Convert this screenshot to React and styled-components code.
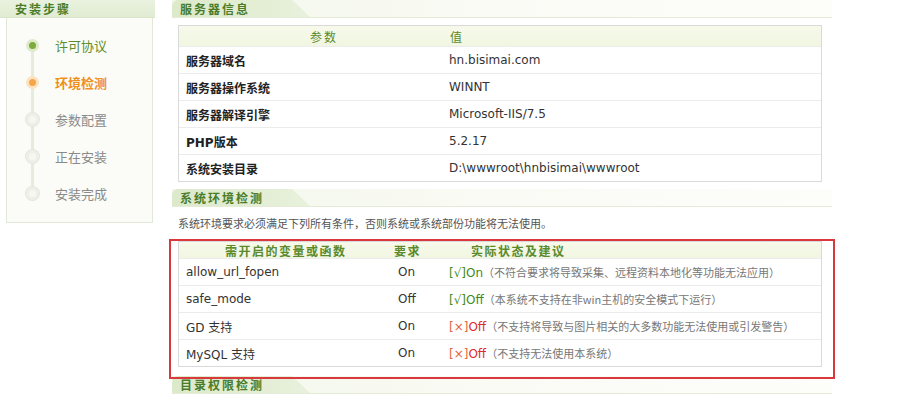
import React from 'react';
import styled, { createGlobalStyle } from 'styled-components';

const GlobalStyle = createGlobalStyle`
  body {
    margin: 0;
    background: #fff;
    font-family: "DejaVu Sans", "Noto Sans CJK SC", sans-serif;
    color: #333;
  }
`;

const Page = styled.div`
  display: flex;
  align-items: flex-start;
  width: 923px;
  height: 400px;
  overflow: hidden;
`;

const Sidebar = styled.div`
  flex: none;
  width: 155px;
`;

const SideHead = styled.div`
  height: 17px;
  line-height: 17px;
  padding-left: 15px;
  background: linear-gradient(#eaf2df, #e1ecd2);
  border-bottom: 1px solid #d9e5c8;
  color: #4a7c2a;
  font: bold 12px "Noto Sans CJK SC", sans-serif;
  letter-spacing: 2px;
`;

const StepPanel = styled.div`
  margin: 0 2px 0 6px;
  height: 205px;
  box-sizing: border-box;
  border: 1px solid #e2e8d6;
  border-top: none;
  background: #fbfcf7;
  padding-top: 9px;
`;

const StepList = styled.div`
  position: relative;

  &::before {
    content: '';
    position: absolute;
    left: 24px;
    top: 18px;
    bottom: 18px;
    width: 3px;
    background: #e7ebde;
  }
`;

const Step = styled.div`
  height: 37px;
  display: flex;
  align-items: center;
  font-family: "Noto Sans CJK SC", sans-serif;
  font-size: 13px;
  font-weight: ${p => (p.$state === 'current' ? 'bold' : 'normal')};
  color: ${p =>
    p.$state === 'done' ? '#5d8d2c' : p.$state === 'current' ? '#f0901c' : '#8a8a8a'};
`;

const Dot = styled.span`
  position: relative;
  flex: none;
  width: 13px;
  height: 13px;
  margin: 0 16px 0 19px;
  border-radius: 50%;
  background: ${p =>
    p.$state === 'done' ? '#dfeacb' : p.$state === 'current' ? '#fbe3c2' : '#eef0e8'};
  box-shadow: 0 0 0 1px ${p => (p.$state === 'pending' ? '#e4e7dc' : 'transparent')};

  &::after {
    content: '';
    position: absolute;
    left: 3px;
    top: 3px;
    width: 7px;
    height: 7px;
    border-radius: 50%;
    background: ${p =>
      p.$state === 'done' ? '#7fab3e' : p.$state === 'current' ? '#f5a64a' : '#f6f7f2'};
  }
`;

const Main = styled.div`
  flex: none;
  width: 660px;
  margin-left: 17px;
`;

const TabBar = styled.div`
  position: relative;
  height: 17px;
  margin-top: ${p => p.$top || 0}px;
  border-bottom: 1px solid #e4ecd8;
  background: linear-gradient(to right, #f3f7ea, #fafbf5 50%, #fdfdfa);
`;

const Tab = styled.div`
  width: 138px;
  height: 17px;
  line-height: 18px;
  padding-left: 8px;
  box-sizing: border-box;
  border-top-left-radius: 6px;
  background: linear-gradient(to right, #dce9ca, #e8f1dc);
  clip-path: polygon(0 0, 87% 0, 100% 100%, 0 100%);
  color: #4a7c2a;
  font: bold 12px "Noto Sans CJK SC", sans-serif;
  letter-spacing: 2px;
`;

const Table = styled.div`
  width: 644px;
  box-sizing: border-box;
  border: 1px solid #dadada;
  background: #fff;
  margin: ${p => p.$margin || '0'};
`;

const Row = styled.div`
  display: grid;
  grid-template-columns: ${p => p.$cols};
  height: ${p => p.$h || 27}px;
  align-items: center;
  border-top: ${p => (p.$head ? 'none' : '1px solid #ececec')};
  background: ${p => (p.$head ? 'linear-gradient(#f7f9ea, #f1f6e2)' : '#fff')};
  box-sizing: border-box;
`;

const HeadCell = styled.div`
  padding-left: ${p => p.$pad}px;
  color: #5a8a2c;
  font: ${p => (p.$bold ? 'bold' : 'normal')} 12px "Noto Sans CJK SC", sans-serif;
  letter-spacing: ${p => (p.$bold ? '1.5px' : '2px')};
  white-space: nowrap;
`;

const Label = styled.div`
  padding-left: 7px;
  color: #222;
  font: bold 12px "DejaVu Sans", "Noto Sans CJK SC", sans-serif;
`;

const Value = styled.div`
  padding-left: 7px;
  color: #333;
  font-size: 12px;
  white-space: nowrap;
`;

const Note = styled.p`
  margin: 7px 0 0 6px;
  line-height: 18px;
  font-family: "Noto Sans CJK SC", sans-serif;
  font-size: 11px;
  color: #555;
`;

const Marked = styled.div`
  position: relative;
  z-index: 2;
  width: 666px;
  box-sizing: border-box;
  margin: 7px 0 -3px -3px;
  padding: 0 11px 10px 7px;
  border: 2px solid #d9383c;
`;

const Flag = styled.span`
  color: ${p => (p.$ok ? '#3f8a22' : '#e4643a')};
`;

const Result = styled.span`
  color: ${p => (p.$ok ? '#3f8a22' : '#dc2a2e')};
`;

const Hint = styled.span`
  color: #777;
  font-family: "Noto Sans CJK SC", sans-serif;
  font-size: 11px;
`;

const serverInfo = [
  ['服务器域名', 'hn.bisimai.com'],
  ['服务器操作系统', 'WINNT'],
  ['服务器解译引擎', 'Microsoft-IIS/7.5'],
  ['PHP版本', '5.2.17'],
  ['系统安装目录', 'D:\\wwwroot\\hnbisimai\\wwwroot'],
];

const envChecks = [
  { name: 'allow_url_fopen', need: 'On', ok: true, actual: 'On', hint: '（不符合要求将导致采集、远程资料本地化等功能无法应用）' },
  { name: 'safe_mode', need: 'Off', ok: true, actual: 'Off', hint: '（本系统不支持在非win主机的安全模式下运行）' },
  { name: 'GD 支持', need: 'On', ok: false, actual: 'Off', hint: '（不支持将导致与图片相关的大多数功能无法使用或引发警告）' },
  { name: 'MySQL 支持', need: 'On', ok: false, actual: 'Off', hint: '（不支持无法使用本系统）' },
];

const steps = [
  ['许可协议', 'done'],
  ['环境检测', 'current'],
  ['参数配置', 'pending'],
  ['正在安装', 'pending'],
  ['安装完成', 'pending'],
];

const INFO_COLS = '263px 1fr';
const ENV_COLS = '212px 51px 1fr';

export default function App() {
  return (
    <Page>
      <GlobalStyle />
      <Sidebar>
        <SideHead>安装步骤</SideHead>
        <StepPanel>
          <StepList>
            {steps.map(([text, state]) => (
              <Step key={text} $state={state}>
                <Dot $state={state} />
                {text}
              </Step>
            ))}
          </StepList>
        </StepPanel>
      </Sidebar>

      <Main>
        <TabBar>
          <Tab>服务器信息</Tab>
        </TabBar>
        <Table $margin="7px 0 0 6px">
          <Row $head $h={20} $cols={INFO_COLS}>
            <HeadCell $pad={131}>参数</HeadCell>
            <HeadCell $pad={8}>值</HeadCell>
          </Row>
          {serverInfo.map(([k, v]) => (
            <Row key={k} $cols={INFO_COLS}>
              <Label>{k}</Label>
              <Value>{v}</Value>
            </Row>
          ))}
        </Table>

        <TabBar $top={7}>
          <Tab>系统环境检测</Tab>
        </TabBar>
        <Note>系统环境要求必须满足下列所有条件，否则系统或系统部份功能将无法使用。</Note>

        <Marked>
          <Table>
            <Row $head $h={16} $cols={ENV_COLS}>
              <HeadCell $bold $pad={46}>需开启的变量或函数</HeadCell>
              <HeadCell $bold $pad={3}>要求</HeadCell>
              <HeadCell $bold $pad={29}>实际状态及建议</HeadCell>
            </Row>
            {envChecks.map(c => (
              <Row key={c.name} $cols={ENV_COLS}>
                <Value>{c.name}</Value>
                <Value>{c.need}</Value>
                <Value>
                  <Flag $ok={c.ok}>{c.ok ? '[√]' : '[×]'}</Flag>
                  <Result $ok={c.ok}>{c.actual}</Result>
                  <Hint>{c.hint}</Hint>
                </Value>
              </Row>
            ))}
          </Table>
        </Marked>

        <TabBar>
          <Tab>目录权限检测</Tab>
        </TabBar>
      </Main>
    </Page>
  );
}
